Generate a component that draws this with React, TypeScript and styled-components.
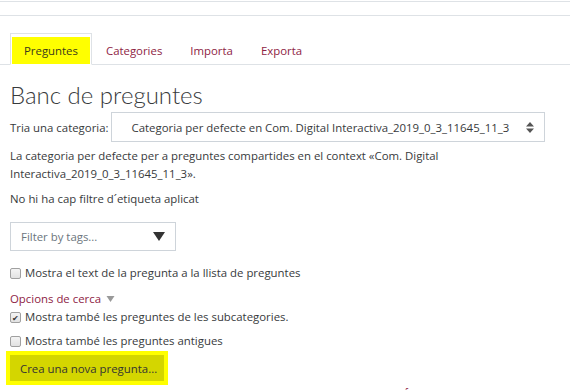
import React from 'react';
import styled, { createGlobalStyle } from 'styled-components';

const GlobalStyle = createGlobalStyle`
  html, body {
    margin: 0;
    padding: 0;
    background: #ffffff;
    overflow: hidden;
  }
  body {
    font-family: "Open Sans", "Noto Sans", Arial, sans-serif;
    font-size: 11.4px;
    color: #373a3c;
  }
`;

const Page = styled.div`
  width: 570px;
  height: 390px;
  overflow: hidden;
`;

const TopBar = styled.div`
  margin-top: 1px;
  height: 13px;
  border-top: 1px solid #dee2e6;
  border-bottom: 1px solid #dee2e6;
`;

const Content = styled.div`
  padding: 17px 0 0 10px;
`;

const TabList = styled.nav`
  display: flex;
  border-bottom: 1px solid #dee2e6;
  margin-left: -10px;
  padding-left: 10px;
`;

const Tab = styled.div<{ active?: boolean }>`
  display: flex;
  padding: 3px 1px 0 1px;
  margin-bottom: ${p => (p.active ? '-1px' : '0')};
  border: 1px solid ${p => (p.active ? '#dee2e6' : 'transparent')};
  border-bottom: ${p => (p.active ? '1px solid #ffffff' : 'none')};
  background: ${p => (p.active ? '#ffffff' : 'transparent')};
`;

const TabLabel = styled.span<{ active?: boolean }>`
  display: block;
  height: 27px;
  line-height: 27px;
  padding: 0 12px;
  background: ${p => (p.active ? '#ffff00' : 'transparent')};
  color: ${p => (p.active ? '#3a3a1c' : '#8e2344')};
`;

const Heading = styled.h2`
  margin: 14px 0 0 0;
  font-family: Lato, "Open Sans", sans-serif;
  font-weight: 300;
  font-size: 24px;
  line-height: 32px;
  color: #373a3c;
`;

const CategoryRow = styled.div`
  display: flex;
  align-items: center;
  gap: 3px;
  margin-top: 1px;
`;

const SelectBox = styled.div`
  display: flex;
  align-items: center;
  justify-content: space-between;
  box-sizing: border-box;
  width: 434px;
  height: 30px;
  border: 1px solid #ced4da;
  padding: 0 10px 0 19px;
  color: #373a3c;
  white-space: nowrap;
`;

const Para = styled.p<{ gap: number }>`
  margin: ${p => p.gap}px 0 0 0;
  line-height: 18px;
`;

const FilterBox = styled.div`
  display: flex;
  align-items: center;
  justify-content: space-between;
  box-sizing: border-box;
  width: 166px;
  height: 29px;
  margin-top: 14px;
  padding: 0 10px 0 10px;
  border: 1px solid #ced4da;
  color: #6c757d;
`;

const CheckRow = styled.label<{ gap?: number }>`
  display: flex;
  align-items: center;
  gap: 4px;
  margin-top: ${p => p.gap ?? 0}px;
  line-height: 18px;
`;

const Box = styled.span`
  display: inline-flex;
  align-items: center;
  justify-content: center;
  width: 9px;
  height: 9px;
  border: 1px solid #a0a0a0;
  border-radius: 2px;
  background: linear-gradient(#f4f4f4, #e2e2e2);
  font-size: 8px;
  line-height: 9px;
  color: #333;
`;

const Toggle = styled.div`
  display: flex;
  align-items: center;
  gap: 5px;
  margin-top: 8px;
  color: #8e2344;
  line-height: 18px;
`;

const CreateButton = styled.button`
  display: block;
  box-sizing: border-box;
  margin: 1px 0 0 -4px;
  width: 162px;
  height: 34px;
  border: 4px solid #ffff00;
  background: #d4d600;
  color: #333;
  font-family: inherit;
  font-size: 11.4px;
  text-align: left;
  white-space: nowrap;
  padding: 0 0 0 10px;
`;

const TableHead = styled.div`
  display: flex;
  gap: 8px;
  margin: 0 0 0 14px;
  font-weight: 700;
  color: #373a3c;
  line-height: 18px;
  white-space: nowrap;
`;

const Sortable = styled.span`
  color: #8e2344;
`;

const SpinIcon = () => (
  <svg width="8" height="11" viewBox="0 0 8 11">
    <path d="M4 0 L8 4.5 H0 Z M4 11 L8 6.5 H0 Z" fill="#555" />
  </svg>
);

const DownTri = ({ color = '#333', w = 12, h = 9 }: { color?: string; w?: number; h?: number }) => (
  <svg width={w} height={h} viewBox="0 0 12 9">
    <path d="M0 0 H12 L6 9 Z" fill={color} />
  </svg>
);

export default function App() {
  return (
    <Page>
      <GlobalStyle />
      <TopBar />
      <Content>
        <TabList>
          <Tab active><TabLabel active>Preguntes</TabLabel></Tab>
          <Tab><TabLabel>Categories</TabLabel></Tab>
          <Tab><TabLabel>Importa</TabLabel></Tab>
          <Tab><TabLabel>Exporta</TabLabel></Tab>
        </TabList>

        <Heading>Banc de preguntes</Heading>

        <CategoryRow>
          <span>Tria una categoria:</span>
          <SelectBox>
            <span>Categoria per defecte en Com. Digital Interactiva_2019_0_3_11645_11_3</span>
            <SpinIcon />
          </SelectBox>
        </CategoryRow>

        <Para gap={5}>
          La categoria per defecte per a preguntes compartides en el context «Com. Digital
          <br />
          Interactiva_2019_0_3_11645_11_3».
        </Para>
        <Para gap={7}>No hi ha cap filtre d´etiqueta aplicat</Para>

        <FilterBox>
          <span>Filter by tags...</span>
          <DownTri />
        </FilterBox>

        <CheckRow gap={13}>
          <Box />
          Mostra el text de la pregunta a la llista de preguntes
        </CheckRow>

        <Toggle>
          Opcions de cerca
          <DownTri color="#999" w={9} h={6} />
        </Toggle>
        <CheckRow>
          <Box>✔</Box>
          Mostra també les preguntes de les subcategories.
        </CheckRow>
        <CheckRow gap={6}>
          <Box />
          Mostra també les preguntes antigues
        </CheckRow>

        <CreateButton>Crea una nova pregunta...</CreateButton>

        <TableHead>
          <Sortable>T</Sortable>
          <span>Pregunta</span>
          <Sortable>Nom de la pregunta / Text de la pregunta</Sortable>
          <span>Creat per</span>
          <Sortable>Última modificació per</Sortable>
        </TableHead>
      </Content>
    </Page>
  );
}
